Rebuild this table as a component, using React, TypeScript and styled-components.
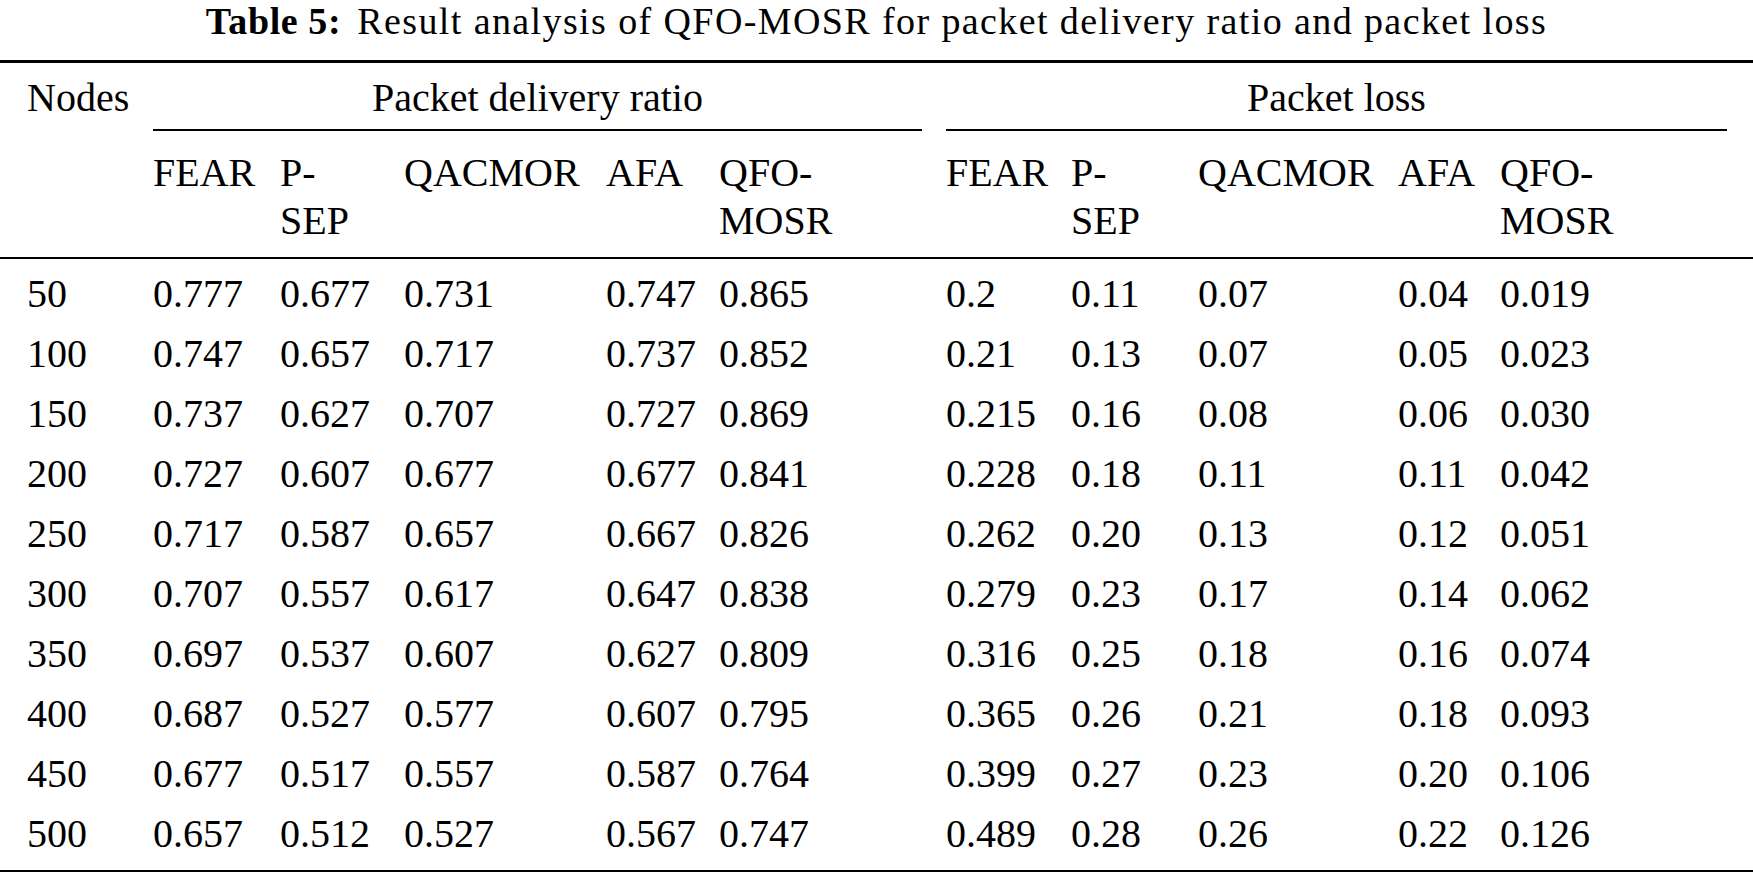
import React from "react";
import styled, { createGlobalStyle } from "styled-components";

const GlobalStyle = createGlobalStyle`
  html, body {
    margin: 0;
    padding: 0;
    background: #ffffff;
  }
  body {
    font-family: "Liberation Serif", "Times New Roman", serif;
    color: #000000;
  }
`;

const Page = styled.div`
  width: 1753px;
  height: 874px;
  background: #ffffff;
  overflow: hidden;
  font-family: "Liberation Serif", "Times New Roman", serif;
`;

const Caption = styled.div`
  height: 42px;
  margin-bottom: 18px;
  font-size: 38px;
  line-height: 42px;
  letter-spacing: 1.4px;
  text-align: center;
  white-space: nowrap;
`;

const CaptionLabel = styled.b`
  font-weight: 700;
  letter-spacing: 0.6px;
  margin-right: 16px;
`;

const Table = styled.div`
  width: 1753px;
  border-top: 3px solid #000;
  border-bottom: 2px solid #000;
  font-family: "Liberation Serif", "Times New Roman", serif;
  font-size: 40px;
`;

const cols = "153px 127px 124px 202px 113px 227px 125px 127px 200px 102px 253px";

const Head = styled.div`
  display: grid;
  grid-template-columns: ${cols};
  border-bottom: 2px solid #000;
`;

const NodesCell = styled.div`
  grid-row: 1 / span 2;
  grid-column: 1;
  line-height: 48px;
  padding: 11px 0 0 27px;
`;

const GroupCell = styled.div<{ $col: string; $inset: number }>`
  grid-row: 1;
  grid-column: ${(p) => p.$col};
  margin-right: ${(p) => p.$inset}px;
  padding: 11px 0 7px;
  line-height: 48px;
  text-align: center;
  border-bottom: 2px solid #000;
  white-space: nowrap;
`;

const HeadCell = styled.div`
  grid-row: 2;
  line-height: 48px;
  padding: 18px 0 12px 0;
  white-space: nowrap;
`;

const Body = styled.div`
  padding: 5px 0 6px;
`;

const Row = styled.div`
  display: grid;
  grid-template-columns: ${cols};
  height: 60px;
`;

const Cell = styled.div<{ $first?: boolean }>`
  line-height: 60px;
  padding-left: ${(p) => (p.$first ? "27px" : "0")};
  white-space: nowrap;
`;

const subHeads: React.ReactNode[] = [
  "FEAR",
  <>
    P-
    <br />
    SEP
  </>,
  "QACMOR",
  "AFA",
  <>
    QFO-
    <br />
    MOSR
  </>,
];

const rows: string[][] = [
  ["50", "0.777", "0.677", "0.731", "0.747", "0.865", "0.2", "0.11", "0.07", "0.04", "0.019"],
  ["100", "0.747", "0.657", "0.717", "0.737", "0.852", "0.21", "0.13", "0.07", "0.05", "0.023"],
  ["150", "0.737", "0.627", "0.707", "0.727", "0.869", "0.215", "0.16", "0.08", "0.06", "0.030"],
  ["200", "0.727", "0.607", "0.677", "0.677", "0.841", "0.228", "0.18", "0.11", "0.11", "0.042"],
  ["250", "0.717", "0.587", "0.657", "0.667", "0.826", "0.262", "0.20", "0.13", "0.12", "0.051"],
  ["300", "0.707", "0.557", "0.617", "0.647", "0.838", "0.279", "0.23", "0.17", "0.14", "0.062"],
  ["350", "0.697", "0.537", "0.607", "0.627", "0.809", "0.316", "0.25", "0.18", "0.16", "0.074"],
  ["400", "0.687", "0.527", "0.577", "0.607", "0.795", "0.365", "0.26", "0.21", "0.18", "0.093"],
  ["450", "0.677", "0.517", "0.557", "0.587", "0.764", "0.399", "0.27", "0.23", "0.20", "0.106"],
  ["500", "0.657", "0.512", "0.527", "0.567", "0.747", "0.489", "0.28", "0.26", "0.22", "0.126"],
];

export default function App() {
  return (
    <Page>
      <GlobalStyle />
      <Caption>
        <CaptionLabel>Table 5:</CaptionLabel>
        Result analysis of QFO-MOSR for packet delivery ratio and packet loss
      </Caption>
      <Table role="table">
        <Head role="rowgroup">
          <NodesCell role="columnheader">Nodes</NodesCell>
          <GroupCell $col="2 / span 5" $inset={24} role="columnheader">
            Packet delivery ratio
          </GroupCell>
          <GroupCell $col="7 / span 5" $inset={26} role="columnheader">
            Packet loss
          </GroupCell>
          {[...subHeads, ...subHeads].map((h, i) => (
            <HeadCell key={i} role="columnheader" style={{ gridColumn: i + 2 }}>
              {h}
            </HeadCell>
          ))}
        </Head>
        <Body role="rowgroup">
          {rows.map((r) => (
            <Row key={r[0]} role="row">
              {r.map((v, i) => (
                <Cell key={i} $first={i === 0} role="cell">
                  {v}
                </Cell>
              ))}
            </Row>
          ))}
        </Body>
      </Table>
    </Page>
  );
}
